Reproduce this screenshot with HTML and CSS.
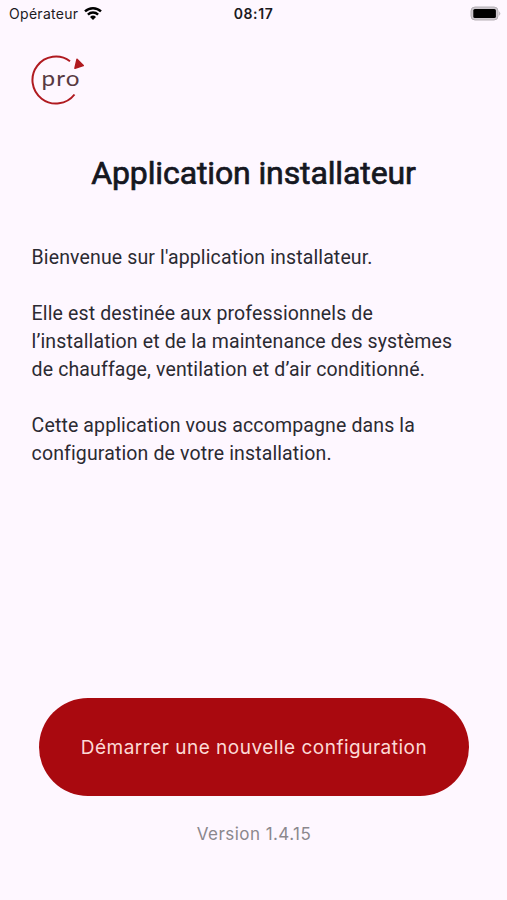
FILE: index.html
```html
<!DOCTYPE html>
<html lang="fr">
<head>
    <meta charset="UTF-8">
    <title>Application installateur</title>
    <link rel="stylesheet" href="styles.css">
</head>
<body>
    <div class="statusbar">
        <div class="carrier">
            <span>Opérateur</span>
            <svg class="wifi" width="18" height="14" viewBox="0 0 18 14">
                <path d="M1 4.4a11.6 11.6 0 0 1 16 0M3.9 7.6a7.4 7.4 0 0 1 10.2 0" fill="none" stroke="#000" stroke-width="2.4"/>
                <path d="M9 13L6 9.9a4.4 4.4 0 0 1 6 0z"/>
            </svg>
        </div>
        <span class="time">08:17</span>
        <div class="power">
            <svg width="31" height="15" viewBox="0 0 31 15">
                <rect x="1" y="1" width="27" height="13" rx="4" fill="#cdc7ce" stroke="#b5b0b6"/>
                <rect x="3.3" y="3" width="22.6" height="9" rx="1.6"/>
                <path d="M29.2 5.2q2.2 2.3 0 4.6z" fill="#b5b0b6"/>
            </svg>
        </div>
    </div>

    <main class="page">
        <svg class="logo" width="54" height="50" viewBox="0 0 54 50">
            <path d="M39 6.2A23.5 23.5 0 1 0 43.5 39.5" fill="none" stroke="#b01a20" stroke-width="2"/>
            <path d="M46 4.4l6.2 6.2-8.2 2.6z" fill="#b01a20" stroke="#b01a20" stroke-width="1.6" stroke-linejoin="round"/>
            <text x="10.5" y="30.5" textLength="39" lengthAdjust="spacingAndGlyphs" class="logo-text">pro</text>
        </svg>
        <h1>Application installateur</h1>
        <div class="intro">
            <p>Bienvenue sur l'application installateur.</p>
            <p>Elle est destinée aux professionnels de<br>l’installation et de la maintenance des systèmes<br>de chauffage, ventilation et d’air conditionné.</p>
            <p>Cette application vous accompagne dans la<br>configuration de votre installation.</p>
        </div>
        <button class="start">Démarrer une nouvelle configuration</button>
        <p class="version">Version 1.4.15</p>
    </main>
</body>
</html>
```
FILE: styles.css
```css
* {
    box-sizing: border-box;
}
body {
    margin: 0;
    height: 900px;
    display: flex;
    flex-direction: column;
    background-color: #fef7ff;
    color: #15171f;
    font-family: Roboto, sans-serif;
}
.statusbar {
    display: grid;
    grid-template-columns: 1fr auto 1fr;
    align-items: center;
    height: 27px;
    padding: 0 6px 0 9px;
    font-family: Inter, sans-serif;
    font-size: 14px;
    color: #1c1a1e;
}
.carrier {
    display: flex;
    align-items: center;
    gap: 6px;
    letter-spacing: 0.3px;
}
.time {
    font-weight: 600;
    letter-spacing: 0.6px;
    margin-right: 3px;
}
.power {
    display: flex;
    justify-content: flex-end;
}
.page {
    flex: 1;
    display: flex;
    flex-direction: column;
    padding: 28px 31px 0;
}
.logo {
    display: block;
}
.logo-text {
    font-family: Lato, sans-serif;
    font-size: 22px;
    letter-spacing: 1px;
    fill: #583a42;
}
h1 {
    margin: 47px 0 0;
    text-align: center;
    font-size: 32px;
    font-weight: 400;
    line-height: 42px;
    letter-spacing: -0.12px;
    -webkit-text-stroke: 0.7px #15171f;
}
.intro {
    display: flex;
    flex-direction: column;
    gap: 28px;
    margin-top: 50px;
    padding-left: 0.6px;
    font-size: 19.5px;
    line-height: 28.1px;
    letter-spacing: 0.13px;
    white-space: nowrap;
    color: #2b2a32;
}
p {
    margin: 0;
}
.start {
    margin: auto 7px 0 8px;
    height: 98px;
    padding-top: 2px;
    border: none;
    border-radius: 49px;
    background-color: #a9090f;
    color: #fcd9d6;
    font-family: Inter, sans-serif;
    font-size: 19px;
    letter-spacing: 0.5px;
    cursor: pointer;
}
.version {
    margin: 26px 0 54px;
    padding-left: 1px;
    text-align: center;
    font-family: Inter, sans-serif;
    font-size: 17px;
    letter-spacing: 0.45px;
    line-height: 24px;
    color: #8b878d;
}
```
